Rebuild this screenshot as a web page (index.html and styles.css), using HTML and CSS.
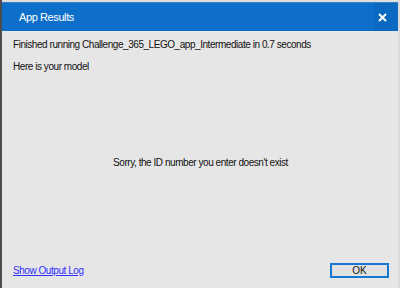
FILE: index.html
```html
<!DOCTYPE html>
<html lang="en">
<head>
  <meta charset="UTF-8" />
  <title>App Results</title>
  <link rel="stylesheet" href="styles.css">
</head>
<body>

<div class="dialog">
  <div class="title-bar">
    <div class="title">App Results</div>
    <div class="close-btn">
      <svg width="9" height="9" viewBox="0 0 9 9">
        <path d="M1 1 L8 8 M8 1 L1 8" stroke="#fff" stroke-width="2" />
      </svg>
    </div>
  </div>

  <div class="content">
    <p class="line">Finished running Challenge_365_LEGO_app_Intermediate in 0.7 seconds</p>
    <p class="line">Here is your model</p>
    <div class="message">Sorry, the ID number you enter doesn't exist</div>
    <div class="footer">
      <a class="log-link" href="#">Show Output Log</a>
      <button class="ok-btn">OK</button>
    </div>
  </div>
</div>

</body>
</html>
```

FILE: styles.css
```css
* {
  margin: 0;
  padding: 0;
  box-sizing: border-box;
}
body {
  width: 400px;
  height: 288px;
  background: #dedede;
  font-family: 'Liberation Sans', Arial, sans-serif;
  font-size: 10px;
  letter-spacing: -0.45px;
  color: #111;
  overflow: hidden;
}
.dialog {
  display: flex;
  flex-direction: column;
  height: 288px;
  padding-top: 2px;
  border-left: 2px solid #4d4d4d;
  border-right: 2px solid #dadada;
}
.title-bar {
  display: flex;
  align-items: center;
  height: 29px;
  background: #0e6fca;
  border-top: 1px solid #3c7fc0;
  color: #fff;
}
.title {
  flex: 1;
  padding-left: 17px;
  font-size: 11px;
  letter-spacing: -0.4px;
}
.close-btn {
  width: 24px;
  height: 28px;
  display: flex;
  align-items: center;
  justify-content: center;
  padding-right: 8px;
  background: #0c69c2;
}
.content {
  flex: 1;
  display: flex;
  flex-direction: column;
  background: #e6e6e6;
  padding: 7px 10px 10px 11px;
}
.line {
  line-height: 14px;
  margin-bottom: 8px;
}
.message {
  flex: 1;
  display: flex;
  align-items: center;
  justify-content: center;
  padding-bottom: 20px;
}
.footer {
  display: flex;
  justify-content: space-between;
  align-items: center;
}
.log-link {
  color: #3030ff;
}
.ok-btn {
  width: 59px;
  height: 15px;
  margin-right: -1px;
  background: #e1e1e1;
  border: 2px solid #1278d0;
  font-family: 'Liberation Sans', Arial, sans-serif;
  font-size: 10px;
  line-height: 11px;
  color: #111;
}
```
